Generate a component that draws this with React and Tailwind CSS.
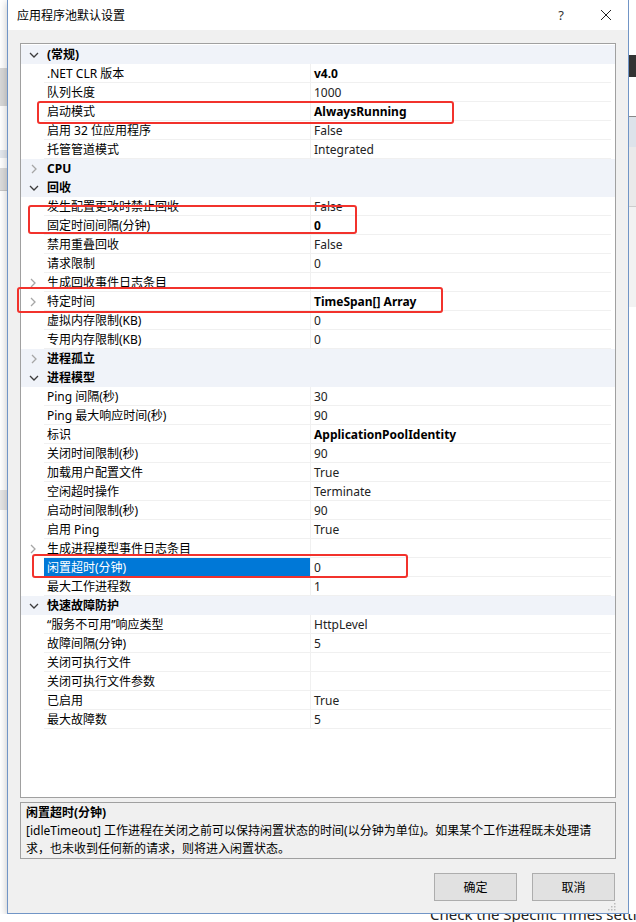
import React from 'react'

const rows = [
    { cat: '(常规)', open: true },
    { l: '.NET CLR 版本', v: 'v4.0', b: true },
    { l: '队列长度', v: '1000' },
    { l: '启动模式', v: 'AlwaysRunning', b: true },
    { l: '启用 32 位应用程序', v: 'False' },
    { l: '托管管道模式', v: 'Integrated' },
    { cat: 'CPU', open: false },
    { cat: '回收', open: true },
    { l: '发生配置更改时禁止回收', v: 'False' },
    { l: '固定时间间隔(分钟)', v: '0', b: true },
    { l: '禁用重叠回收', v: 'False' },
    { l: '请求限制', v: '0' },
    { l: '生成回收事件日志条目', v: '', sub: true },
    { l: '特定时间', v: 'TimeSpan[] Array', b: true, sub: true },
    { l: '虚拟内存限制(KB)', v: '0' },
    { l: '专用内存限制(KB)', v: '0' },
    { cat: '进程孤立', open: false },
    { cat: '进程模型', open: true },
    { l: 'Ping 间隔(秒)', v: '30' },
    { l: 'Ping 最大响应时间(秒)', v: '90' },
    { l: '标识', v: 'ApplicationPoolIdentity', b: true },
    { l: '关闭时间限制(秒)', v: '90' },
    { l: '加载用户配置文件', v: 'True' },
    { l: '空闲超时操作', v: 'Terminate' },
    { l: '启动时间限制(秒)', v: '90' },
    { l: '启用 Ping', v: 'True' },
    { l: '生成进程模型事件日志条目', v: '', sub: true },
    { l: '闲置超时(分钟)', v: '0', sel: true },
    { l: '最大工作进程数', v: '1' },
    { cat: '快速故障防护', open: true },
    { l: '“服务不可用”响应类型', v: 'HttpLevel' },
    { l: '故障间隔(分钟)', v: '5' },
    { l: '关闭可执行文件', v: '' },
    { l: '关闭可执行文件参数', v: '' },
    { l: '已启用', v: 'True' },
    { l: '最大故障数', v: '5' },
]

const Down = () => (
    <svg width="10" height="6" viewBox="0 0 10 6">
        <path d="M1 1 L5 5 L9 1" fill="none" stroke="#3c3c3c" strokeWidth="1.3" />
    </svg>
)

const Right = () => (
    <svg width="6" height="10" viewBox="0 0 6 10">
        <path d="M1 1 L5 5 L1 9" fill="none" stroke="#a6a6a6" strokeWidth="1.3" />
    </svg>
)

const Row = ({ r }) => {
    if (r.cat) {
        return (
            <div className="flex h-[19px] items-center bg-[#f0f3f9]">
                <div className="flex w-[23px] justify-center pl-[2px]">
                    {r.open ? <Down /> : <Right />}
                </div>
                <div className="pl-[3px] font-bold text-black">{r.cat}</div>
            </div>
        )
    }
    return (
        <div className="flex h-[19px] items-stretch">
            <div className="flex w-[23px] items-center justify-center pl-[1px]">
                {r.sub && <Right />}
            </div>
            <div className="flex flex-1 items-stretch border-b border-[#f0f0f0] mr-[4px]">
                <div
                    className={
                        r.sel
                            ? 'flex w-[266px] items-center bg-[#0078d7] pl-[3px] text-white'
                            : 'flex w-[266px] items-center pl-[3px] text-black'
                    }
                >
                    {r.l}
                </div>
                <div
                    className={
                        r.b
                            ? 'flex flex-1 items-center border-l border-[#f0f0f0] pl-[3px] font-bold text-black'
                            : 'flex flex-1 items-center border-l border-[#f0f0f0] pl-[3px] text-[#222]'
                    }
                >
                    {r.v}
                </div>
            </div>
        </div>
    )
}

const App = () => {
    return (
        <div
            className="relative flex h-[922px] w-[636px] flex-col overflow-hidden bg-white text-[12px] leading-[19px]"
            style={{ fontFamily: '"Noto Sans", "Noto Sans CJK SC", sans-serif' }}
        >
            <div className="flex h-[914px]">
                <div className="flex w-[7px] flex-col bg-white">
                    <div className="h-[68px]" />
                    <div className="h-[38px] bg-[#d8d8d8]" />
                    <div className="h-[44px]" />
                    <div className="h-[8px] bg-[#e4e8ee]" />
                    <div className="h-[10px]" />
                    <div className="h-[22px] bg-[#dcdcdc]" />
                    <div className="h-[300px] border-t border-[#c8c8c8]" />
                    <div className="h-[20px] bg-[#e6e6e6]" />
                </div>
                <div className="flex w-[622px] flex-col border-x border-b border-[#7195c6] bg-[#f0f0f0] shadow-[0_2px_8px_rgba(0,0,0,0.25)]">
                    <div className="flex h-[30px] items-center bg-white pl-[9px] text-black">
                        <span>应用程序池默认设置</span>
                        <span className="ml-auto mr-[36px] text-[13px] text-[#333]">?</span>
                        <svg width="12" height="12" viewBox="0 0 12 12" className="mr-[16px]">
                            <path d="M1 1 L11 11 M11 1 L1 11" stroke="#222" strokeWidth="1" />
                        </svg>
                    </div>
                    <div className="flex flex-1 flex-col px-[12px] pt-[13px]">
                        <div className="flex h-[755px] flex-col border border-[#a0a0a0] bg-white pt-[1px]">
                            {rows.map((r, i) => (
                                <Row key={i} r={r} />
                            ))}
                        </div>
                        <div className="mt-[4px] h-[57px] border border-[#a0a0a0] px-[5px] pt-[1px] text-[12px] leading-[18px] text-black">
                            <div className="font-bold">闲置超时(分钟)</div>
                            <div className="whitespace-nowrap">
                                [idleTimeout] 工作进程在关闭之前可以保持闲置状态的时间(以分钟为单位)。如果某个工作进程既未处理请
                            </div>
                            <div className="whitespace-nowrap">求，也未收到任何新的请求，则将进入闲置状态。</div>
                        </div>
                        <div className="mt-[14px] flex justify-end gap-[15px] pr-[1px]">
                            <button className="h-[28px] w-[83px] border border-[#adadad] bg-[#e1e1e1] text-black">
                                确定
                            </button>
                            <button className="h-[28px] w-[83px] border border-[#adadad] bg-[#e1e1e1] text-black">
                                取消
                            </button>
                        </div>
                        <div className="mt-auto flex justify-end pb-[2px]">
                            <svg width="8" height="8" viewBox="0 0 8 8">
                                <rect x="6" y="0" width="1.5" height="1.5" fill="#bbb" />
                                <rect x="3" y="3" width="1.5" height="1.5" fill="#bbb" />
                                <rect x="6" y="3" width="1.5" height="1.5" fill="#bbb" />
                                <rect x="0" y="6" width="1.5" height="1.5" fill="#bbb" />
                                <rect x="3" y="6" width="1.5" height="1.5" fill="#bbb" />
                                <rect x="6" y="6" width="1.5" height="1.5" fill="#bbb" />
                            </svg>
                        </div>
                    </div>
                </div>
                <div className="flex w-[7px] flex-col bg-white">
                    <div className="h-[55px]" />
                    <div className="h-[22px] bg-[#333]" />
                    <div className="h-[40px] border-b border-[#888]" />
                    <div className="h-[30px] bg-[#dde3ea]" />
                    <div className="h-[60px] border-b border-[#ccc] bg-[#eaeaea]" />
                    <div className="h-[100px] bg-[#f2f2f2]" />
                </div>
            </div>
            <div className="h-[8px] overflow-hidden bg-white">
                <div className="-mt-[9px] whitespace-nowrap pl-[430px] text-[15px] text-[#222]">
                    Check the Specific Times setting
                </div>
            </div>

            <div className="absolute left-[37px] top-[101px] h-[23px] w-[417px] rounded-[3px] border-[2.5px] border-[#f2322c]" />
            <div className="absolute left-[28px] top-[205px] h-[29px] w-[329px] rounded-[3px] border-[2.5px] border-[#f2322c]" />
            <div className="absolute left-[17px] top-[287px] h-[26px] w-[426px] rounded-[3px] border-[2.5px] border-[#f2322c]" />
            <div className="absolute left-[32px] top-[554px] h-[24px] w-[376px] rounded-[3px] border-[2.5px] border-[#f2322c]" />
        </div>
    )
}

export default App
